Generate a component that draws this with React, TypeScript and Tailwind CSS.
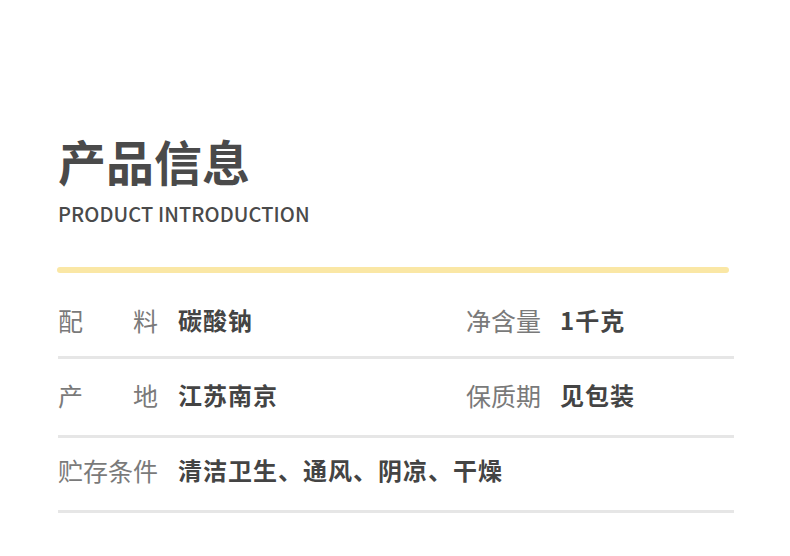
const rows = [
  { left: ['配', '料'], value: '碳酸钠', right: '净含量', rightValue: '1千克', h: 'h-[83px] pt-[11px]' },
  { left: ['产', '地'], value: '江苏南京', right: '保质期', rightValue: '见包装', h: 'h-[76px] pb-[4px]' },
  { left: ['贮', '存', '条', '件'], value: '清洁卫生、通风、阴凉、干燥', h: 'h-[72px] pb-[8px]' },
];

export default function App() {
  return (
    <div
      className="w-[790px] h-[556px] bg-white pl-[58px] pt-[132px] overflow-hidden"
      style={{ fontFamily: '"Noto Sans CJK SC", "Noto Sans", sans-serif' }}
    >
      {/* Title */}
      <h1 className="text-[48px] leading-[56px] font-bold text-[#4a4a4a]">产品信息</h1>
      <p className="mt-[14px] text-[20px] leading-[24px] font-medium tracking-[0.1px] text-[#4a4a4a]">PRODUCT INTRODUCTION</p>

      <div className="mt-[41px] -ml-px w-[672px] h-[6px] rounded-full bg-[#fae7a5]" />

      {/* Info rows */}
      <div className="w-[676px]">
        {rows.map((row, i) => (
          <div key={i}>
            <div className={`flex items-center ${row.h}`}>
              <div className="flex w-[408px] items-center">
                <span className="flex w-[100px] justify-between text-[25px] leading-none text-[#7a7a7a]">
                  {row.left.map((c, j) => (
                    <span key={j}>{c}</span>
                  ))}
                </span>
                <span className="ml-[20px] text-[24px] leading-none font-bold tracking-[1px] text-[#444444] whitespace-nowrap">{row.value}</span>
              </div>
              {row.right && (
                <div className="flex items-center">
                  <span className="text-[25px] leading-none text-[#7a7a7a]">{row.right}</span>
                  <span className="ml-[19px] text-[24px] leading-none font-bold tracking-[1px] text-[#444444]">{row.rightValue}</span>
                </div>
              )}
            </div>
            <div className="h-[3px] bg-[#e6e6e6]" />
          </div>
        ))}
      </div>
    </div>
  );
}
